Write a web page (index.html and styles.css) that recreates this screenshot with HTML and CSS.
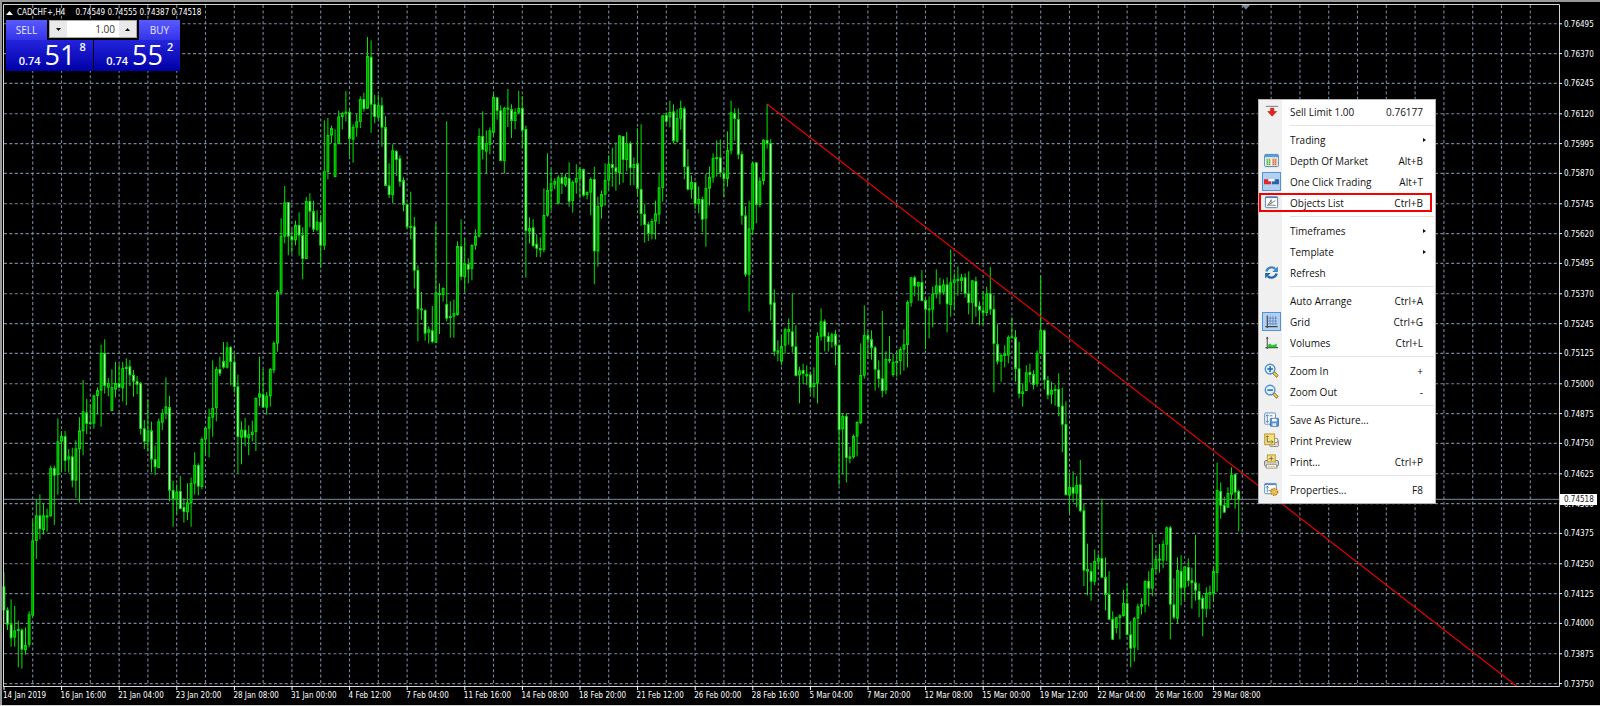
FILE: index.html
```html
<!DOCTYPE html>
<html lang="en">
<head>
    <meta charset="UTF-8">
    <meta name="viewport" content="width=device-width, initial-scale=1.0">
    <title>CADCHF+,H4</title>
    <link rel="stylesheet" href="styles.css">
</head>
<body>
    <main class="terminal">
        <svg id="chart" class="chart" viewBox="0 0 1600 706" role="img" aria-label="CADCHF+ H4 candlestick chart"></svg>

        <section class="quote">
            <h1 class="quote-title">
                <svg class="quote-arrow" viewBox="0 0 7 4"><path d="M0 4L3.5 0L7 4Z"/></svg>
                <span class="symbol">CADCHF+,H4</span>
                <span>0.74549 0.74555 0.74387 0.74518</span>
            </h1>
            <form class="trade">
                <div class="trade-top">
                    <button type="button" class="side">SELL</button>
                    <div class="volume">
                        <button type="button" class="step" aria-label="Decrease volume"><svg viewBox="0 0 5 3"><path d="M0 0H5L2.5 3Z"/></svg></button>
                        <input class="lots" type="text" value="1.00" aria-label="Volume">
                        <button type="button" class="step" aria-label="Increase volume"><svg viewBox="0 0 5 3"><path d="M0 3H5L2.5 0Z"/></svg></button>
                    </div>
                    <button type="button" class="side">BUY</button>
                </div>
                <div class="trade-prices">
                    <div class="price"><span class="small">0.74</span><span class="big">51</span><span class="sup">8</span></div>
                    <div class="price"><span class="small">0.74</span><span class="big">55</span><span class="sup">2</span></div>
                </div>
            </form>
        </section>

        <ul class="menu">
            <li><button class="item">
                <svg class="icon" viewBox="0 0 16 16"><path d="M2 2.5H15" stroke="#777"/><path d="M7 4.5H10.5V8H13.5L8.7 13L4 8H7Z" fill="#e8241c" stroke="#b01010" stroke-width=".6"/></svg>
                <span class="label">Sell Limit 1.00</span><span class="key">0.76177</span></button></li>
            <li class="sep"></li>
            <li><button class="item"><span class="icon"></span><span class="label">Trading</span><span class="sub"></span></button></li>
            <li><button class="item">
                <svg class="icon" viewBox="0 0 16 16"><rect x=".7" y="1.5" width="14.6" height="13" rx="1" fill="#fff" stroke="#3f7fbd"/><path d="M1 2H15V4.6H1Z" fill="#5b9ad6"/><path d="M2 5.5H7.6V13.5H2Z" fill="#c3e6a3"/><path d="M8.4 5.5H14V13.5H8.4Z" fill="#f6bda4"/><path d="M3 7.5H7M3 9.8H7M3 12H7" stroke="#2c7c26" stroke-dasharray="1.2 1"/><path d="M9.4 7.5H13.4M9.4 9.8H13.4M9.4 12H13.4" stroke="#a13b2b" stroke-dasharray="1.2 1"/></svg>
                <span class="label">Depth Of Market</span><span class="key">Alt+B</span></button></li>
            <li><button class="item">
                <svg class="icon checked" viewBox="0 0 16 16"><path d="M0 5.5H4.5V8H7.5V11H0Z" fill="#dc2b2b"/><path d="M16 5.5H11.5V8H8.5V11H16Z" fill="#2a62ad"/><path d="M5 5.5H11V7.4H5Z" fill="#fff"/></svg>
                <span class="label">One Click Trading</span><span class="key">Alt+T</span></button></li>
            <li class="highlight"><button class="item">
                <svg class="icon" viewBox="0 0 16 16"><rect x="1.5" y="2" width="13" height="11.5" rx="1" fill="#fff" stroke="#4d80b3"/><path d="M1.5 2.5H14.5" stroke="#4d80b3" stroke-width="1.6"/><path d="M3.5 11.5L8 5M3.5 11.5L12 6M5 10.7L12.5 11M7.5 5V9" stroke="#555" fill="none" stroke-width=".8"/></svg>
                <span class="label">Objects List</span><span class="key">Ctrl+B</span></button></li>
            <li class="sep"></li>
            <li><button class="item"><span class="icon"></span><span class="label">Timeframes</span><span class="sub"></span></button></li>
            <li><button class="item"><span class="icon"></span><span class="label">Template</span><span class="sub"></span></button></li>
            <li><button class="item">
                <svg class="icon" viewBox="0 0 16 16"><path d="M2.6 7A5.6 5.6 0 0 1 12 4.2" fill="none" stroke="#3e86c6" stroke-width="2.6"/><path d="M14.8 1.5V7.5H8.8Z" fill="#3e86c6"/><path d="M13.4 9A5.6 5.6 0 0 1 4 11.8" fill="none" stroke="#2467a8" stroke-width="2.6"/><path d="M1.2 14.5V8.5H7.2Z" fill="#2467a8"/></svg>
                <span class="label">Refresh</span></button></li>
            <li class="sep"></li>
            <li><button class="item"><span class="icon"></span><span class="label">Auto Arrange</span><span class="key">Ctrl+A</span></button></li>
            <li><button class="item">
                <svg class="icon checked" viewBox="0 0 16 16"><path d="M6.5 2V12M9.5 2V12M12.5 2V12M4 4.5H14M4 7.5H14M4 10.5H14" stroke="#5b86b8" stroke-width=".8"/><path d="M3.5 1.5V15M1.5 13.5H14.5" stroke="#444" stroke-width="1.2"/></svg>
                <span class="label">Grid</span><span class="key">Ctrl+G</span></button></li>
            <li><button class="item">
                <svg class="icon" viewBox="0 0 16 16"><path d="M3.5 2V15M1.5 13.5H15" stroke="#555" stroke-width="1.2"/><path d="M2 4L3.5 1.5L5 4Z" fill="#555"/><path d="M4.5 13V10L6.5 9L8.5 11L11 10.5L13.5 9V13Z" fill="#19cf28"/></svg>
                <span class="label">Volumes</span><span class="key">Ctrl+L</span></button></li>
            <li class="sep"></li>
            <li><button class="item">
                <svg class="icon" viewBox="0 0 16 16"><path d="M10 10L14.5 14.5" stroke="#8a6414" stroke-width="3.2"/><path d="M10.5 10.5L14 14" stroke="#f2cf58" stroke-width="2"/><circle cx="6.5" cy="6.5" r="5.2" fill="#dff0fc" stroke="#4d8fc9" stroke-width="1.4"/><path d="M6.5 3.5V9.5M3.5 6.5H9.5" stroke="#2167a8" stroke-width="1.6"/></svg>
                <span class="label">Zoom In</span><span class="key">+</span></button></li>
            <li><button class="item">
                <svg class="icon" viewBox="0 0 16 16"><path d="M10 10L14.5 14.5" stroke="#8a6414" stroke-width="3.2"/><path d="M10.5 10.5L14 14" stroke="#f2cf58" stroke-width="2"/><circle cx="6.5" cy="6.5" r="5.2" fill="#dff0fc" stroke="#4d8fc9" stroke-width="1.4"/><path d="M3.5 6.5H9.5" stroke="#2167a8" stroke-width="1.6"/></svg>
                <span class="label">Zoom Out</span><span class="key">-</span></button></li>
            <li class="sep"></li>
            <li><button class="item">
                <svg class="icon" viewBox="0 0 16 16"><rect x=".7" y="1" width="11.5" height="12" rx="1" fill="#fff" stroke="#5b8fc2"/><path d="M3.5 3V11M2 4.5L3.5 2.8L5 4.5M2 9.5L3.5 11.2L5 9.5M6 4H9" stroke="#44709d" fill="none" stroke-width=".9"/><rect x="6.7" y="6.7" width="8.8" height="8.6" rx="1" fill="#5a94cf" stroke="#2f669f" stroke-width=".8"/><path d="M8.5 7.2H13.5V10H8.5Z" fill="#fff"/><path d="M9 12H13V15H9Z" fill="#dbe9f7"/></svg>
                <span class="label">Save As Picture...</span></button></li>
            <li><button class="item">
                <svg class="icon" viewBox="0 0 16 16"><rect x="6" y="8" width="9.5" height="6.5" rx="1.5" fill="#ddd" stroke="#777" stroke-width=".8"/><circle cx="12.5" cy="8" r="2.5" fill="#eee" stroke="#666" stroke-width=".8"/><rect x=".8" y="1" width="10.5" height="11.5" fill="#f9df6e" stroke="#b08d2c" stroke-width=".9"/><path d="M3.5 3V9.5H9.5M8 8L9.5 9.5L8 11M2.2 4.3L3.5 3L4.8 4.3" fill="none" stroke="#4c5f87" stroke-width=".9"/></svg>
                <span class="label">Print Preview</span></button></li>
            <li><button class="item">
                <svg class="icon" viewBox="0 0 16 16"><rect x=".6" y="7" width="14.8" height="6" rx="1.5" fill="#d9d9d9" stroke="#666" stroke-width=".9"/><rect x="3.5" y="1" width="8.5" height="7.5" fill="#f9df6e" stroke="#b08d2c" stroke-width=".9"/><path d="M7.8 2.5V7M5.5 5H10" stroke="#4c5f87" stroke-width=".9"/><path d="M3 11H13L14 15H2Z" fill="#fff" stroke="#777" stroke-width=".8"/><path d="M4 13H12" stroke="#e2bd48"/></svg>
                <span class="label">Print...</span><span class="key">Ctrl+P</span></button></li>
            <li class="sep"></li>
            <li><button class="item">
                <svg class="icon" viewBox="0 0 16 16"><rect x=".7" y="1.5" width="12.5" height="11" rx="1" fill="#fff" stroke="#5b8fc2"/><path d="M.7 2.5H13" stroke="#5b8fc2" stroke-width="1.8"/><path d="M3.5 4.5V11M2.3 6L3.5 4.5L4.7 6M5 9H8" stroke="#44709d" fill="none" stroke-width=".9"/><circle cx="11" cy="10.5" r="3.6" fill="#f3c049" stroke="#bb841c" stroke-width="1.5" stroke-dasharray="1.7 .9"/><circle cx="11" cy="10.5" r="1.3" fill="#fff3cf" stroke="#bb841c" stroke-width=".6"/></svg>
                <span class="label">Properties...</span><span class="key">F8</span></button></li>
        </ul>
    </main>

    <script src="chart.js"></script>
</body>
</html>
```

FILE: styles.css
```css
* {
    box-sizing: border-box;
}

body {
    margin: 0;
    background-color: #000;
    font-family: "Open Sans", "Noto Sans", sans-serif;
}

button,
input {
    font-family: inherit;
    border: none;
    margin: 0;
    padding: 0;
}

.terminal {
    position: relative;
    overflow: hidden;
}

.chart {
    display: block;
    width: 100%;
    height: auto;
}

/* chart parts */
.grid line {
    stroke: #76869a;
    stroke-width: 1.1;
    stroke-dasharray: 3 2.4;
}

.frame {
    fill: none;
    stroke: #d4d4d4;
    stroke-width: 1;
}

.window-edge {
    fill: none;
    stroke: #979a97;
    stroke-width: 2;
}

.bottom-edge {
    fill: #d8d8d8;
}

.candles line,
.candles rect {
    stroke: #00e600;
    stroke-width: 1;
}

.candles .up {
    fill: #008a00;
}

.candles .down {
    fill: #fff;
}

.trend {
    stroke: #e60000;
    stroke-width: 1.2;
}

.bid-line {
    stroke: #7d8b9c;
    stroke-width: 1;
}

.bid-box {
    fill: #fff;
}

.marker {
    fill: #778899;
}

.axis text {
    font-family: "DejaVu Sans Condensed", "Open Sans", sans-serif;
    font-size: 8px;
    fill: #fff;
}

.axis line {
    stroke: #fff;
}

.axis .bid-text {
    fill: #222;
}

/* one click trading panel */
.quote {
    position: absolute;
    top: 6px;
    left: 6px;
}

.quote-title {
    display: flex;
    align-items: center;
    height: 14px;
    margin: 0;
    color: #fff;
    font-family: "DejaVu Sans Condensed", "Open Sans", sans-serif;
    font-size: 8px;
    font-weight: normal;
    line-height: 12px;
    white-space: nowrap;
}

.quote-arrow {
    width: 7px;
    height: 4px;
    fill: #fff;
}

.symbol {
    margin: 0 10px 0 4px;
}

.trade {
    width: 174px;
    background-color: #000;
}

.trade-top {
    display: flex;
    justify-content: space-between;
}

.side {
    width: 41px;
    height: 20px;
    color: #e6eaff;
    font-size: 10px;
    font-weight: 500;
    line-height: 18px;
    background: linear-gradient(#5a5aff, #3434e8);
}

.volume {
    display: flex;
    width: 88px;
    height: 18px;
    border: 1px solid #aaa;
    background-color: #fff;
}

.step {
    display: flex;
    align-items: center;
    justify-content: center;
    width: 17px;
    background-color: #e9e9e9;
}

.step svg {
    width: 5px;
    height: 3px;
    fill: #111;
}

.lots {
    flex: 1;
    min-width: 0;
    padding-right: 4px;
    font-size: 10px;
    text-align: right;
    color: #333;
    background-color: #fff;
}

.trade-prices {
    display: grid;
    grid-template-columns: 1fr 1fr;
    gap: 1px;
}

.price {
    display: flex;
    align-items: flex-end;
    justify-content: center;
    gap: 4px;
    height: 31px;
    padding: 0 0 4px 6px;
    color: #fff;
    background: linear-gradient(#2424dc, #0000a8);
}

.small {
    font-size: 11px;
    font-weight: 600;
    line-height: 12px;
}

.big {
    font-size: 27px;
    line-height: 24px;
}

.sup {
    align-self: flex-start;
    font-size: 11px;
    font-weight: 600;
    line-height: 14px;
}

/* context menu */
.menu {
    position: absolute;
    top: 99px;
    left: 1258px;
    width: 178px;
    margin: 0;
    padding: 1px 1px 3px;
    list-style: none;
    border: 1px solid #b5b5b5;
    background: linear-gradient(to right, #f0f0f0 23px, #fff 23px);
}

.item {
    display: flex;
    align-items: center;
    width: 100%;
    height: 21px;
    padding: 0 11px 0 2px;
    color: #111;
    font-size: 10px;
    line-height: 14px;
    text-align: left;
    background: none;
}

.icon {
    flex: none;
    width: 19px;
    height: 19px;
    padding: 2px;
    margin-right: 9px;
}

.checked {
    padding: 1px;
    border: 1px solid #4f94dc;
    background-color: #b3d0f0;
}

.label {
    flex: 1;
    white-space: nowrap;
}

.sub {
    border: 2px solid transparent;
    border-left: 3px solid #111;
    border-right: none;
    margin-right: -3px;
}

.sep {
    height: 7px;
    margin-left: 30px;
    padding-top: 3px;
}

.sep::before {
    content: "";
    display: block;
    height: 1px;
    background-color: #e2e2e2;
}

.highlight {
    position: relative;
}

.highlight::after {
    content: "";
    position: absolute;
    top: 1px;
    bottom: 1px;
    left: -1px;
    right: 2px;
    border: 2px solid #f40000;
}
```

FILE: chart.js
```js
const SVG_NS = 'http://www.w3.org/2000/svg';
const chart = document.getElementById('chart');

const LEFT = 4, TOP = 4, RIGHT = 1559, BOTTOM = 686;
const STEP = 3.6;

// high, body top, body bottom, low, rising (1) or falling (0)
// values are thirds of a pixel below the block's base
const blocks = [
    { base: 900, bars: [
        [816,860,930,970,0],[922,930,973,990,0],[898,973,1014,1040,0],[918,992,1012,1040,1],[962,988,992,1102,1],
        [985,990,1048,1106,0],[982,1036,1050,1064,1],[934,944,1033,1042,1],[662,722,946,950,1],[597,647,722,777,1],
        [583,647,687,718,0],[609,647,689,704,1],[626,647,652,695,1],[497,505,648,650,1],[497,505,526,675,0],
        [355,425,524,584,1],[393,409,424,515,1],[393,409,482,515,0],[447,470,478,518,1],[443,470,541,562,0],
        [421,446,541,593,1],[352,392,447,608,1],[240,335,393,466,1],[297,338,371,402,0],[312,368,372,374,1],
        [284,287,370,386,1],[262,271,287,343,1],[134,160,271,380,1],[118,160,257,281,0],[234,250,262,289,1],
        [208,262,332,334,1],[186,250,268,292,1],[194,250,262,264,0],[186,205,264,304,1],[175,201,206,316,1],
        [180,200,225,258,0],[210,225,244,290,0],[228,244,253,282,0],[246,250,386,404,0],[360,386,424,447,0],
        [299,392,424,455,1],[365,392,478,517,0],[436,478,500,525,0],[356,365,503,505,1],[327,340,367,390,1],
        [232,320,340,358,1],[287,322,571,604,0],[543,571,597,680,0],[553,576,598,642,1],[527,574,626,628,0],
        [595,622,635,668,0],[550,608,636,660,1],[533,550,608,680,1],[457,496,550,584,1],[490,496,559,586,0],
        [412,418,560,568,1],[380,384,418,466,1],[326,352,385,472,1],[181,325,352,410,1],[200,208,323,364,1],
        [170,208,220,228,0],[126,184,202,206,0],[126,143,202,206,1],[138,142,185,256,0],[160,186,260,278,0],
        [224,260,410,520,0],[364,390,412,493,1],[354,390,412,439,0],[376,404,414,466,1],[362,396,404,424,1],
        [292,295,395,453,1],[170,281,292,318,1],[207,283,322,322,0],[276,288,322,344,1],[204,208,288,320,1],
        [124,130,210,220,1]
    ]},
    { base: 60, bars: [
        [810,817,970,995,1],[595,649,817,824,1],[498,548,649,670,1],[546,547,649,706,0],[627,649,660,700,0],
        [602,616,660,676,1],[577,616,646,707,0],[622,646,716,778,0],[531,544,716,718,1],[520,544,574,622,0],
        [542,574,628,636,0],[571,606,628,634,1],[585,607,676,744,0],[301,455,676,690,1],[294,346,455,478,1],
        [317,325,346,370,1],[328,373,470,472,1],[272,290,371,373,1],[275,280,290,328,1],[213,276,280,304,1],
        [268,276,356,408,0],[313,322,358,428,1],[281,305,322,350,1],[229,238,305,324,1],[218,238,266,275,0],
        [51,109,265,266,1],[61,111,253,338,0],[225,253,290,310,0],[225,256,292,298,1],[232,257,322,380,0],
        [289,322,497,499,0],[430,497,524,534,0],[373,392,524,550,1],[390,394,419,468,0],[406,416,485,500,0],
        [472,481,554,574,0],[550,553,620,625,0],[515,619,623,658,1],[591,620,751,806,0],[736,751,867,964,0],
        [816,866,870,899,1],[868,871,940,962,0],[919,929,937,970,1],[858,932,965,970,0],[610,818,967,969,1],
        [790,820,824,942,1],[802,805,824,845,1],[304,853,895,904,0],[844,889,893,953,1],[839,880,889,953,1],
        [664,679,884,887,1],[598,679,770,781,0],[655,733,770,815,1],[715,733,748,790,0],[673,676,746,781,1],
        [628,649,676,689,1],[325,349,649,652,1],[274,349,389,418,0],[331,370,394,461,1],[322,332,373,403,1],
        [220,232,337,346,1],[232,233,272,299,0],[256,272,422,424,0],[260,265,422,461,1],[207,264,268,321,1],
        [253,268,302,354,0],[265,277,302,328,1],[213,265,277,281,1],[228,265,331,384,0],[317,328,632,773,0],
        [592,625,634,670,1],[598,623,677,682,0],[643,672,685,711,0],[652,685,690,711,1],[505,586,689,697,1],
        [400,511,586,590,1],[448,491,512,570,1],[475,484,493,508,1],[466,473,550,553,1],[460,473,491,522,0]
    ]},
    { base: 210, bars: [
        [312,322,345,351,1],[277,325,394,410,0],[331,337,392,428,1],[283,325,337,371,1],[292,298,325,386,1],
        [296,298,376,380,0],[364,367,374,388,1],[322,328,367,436,1],[290,328,543,643,0],[380,409,543,590,1],
        [362,373,409,446,1],[280,331,373,407,1],[256,283,331,359,1],[233,283,293,350,0],[217,293,306,362,0],
        [196,197,308,344,1],[198,199,269,338,0],[186,221,269,304,1],[214,220,293,346,0],[262,283,293,346,1],
        [175,281,356,378,0],[163,358,431,467,0],[403,433,464,518,0],[455,463,491,513,0],[445,454,490,508,1],
        [392,431,454,508,1],[312,353,433,462,1],[136,137,353,395,1],[127,136,154,160,0],[92,127,141,172,1],
        [103,125,213,220,0],[118,145,214,218,1],[92,115,145,179,1],[110,116,290,328,0],[238,290,358,361,0],
        [316,337,358,386,1],[335,338,401,418,0],[349,388,401,430,1],[380,388,448,487,0],[312,355,445,530,1],
        [290,322,355,406,1],[250,265,322,338,1],[211,262,266,320,1],[208,263,308,322,0],[295,310,326,382,0],
        [184,241,326,350,1],[92,128,241,253,1],[115,130,146,212,0],[115,148,253,268,0],[244,253,437,464,0],
        [409,437,613,620,0],[392,476,613,724,1],[275,280,478,494,1],[277,278,404,460,0],[322,334,404,412,1],
        [208,210,332,344,1],[102,211,221,236,0],[207,220,703,752,0],[658,698,844,858,0],[811,842,847,874,1],
        [794,829,874,886,1],[773,779,826,850,1],[745,778,785,824,1],[670,785,829,848,0],[766,830,917,919,0],
        [890,902,915,1000,1],[881,901,911,942,0],[886,913,918,945,1],[904,914,952,971,0],[892,940,950,983,1],
        [787,799,940,1000,1],[715,755,799,812,1],[748,755,799,844,0],[787,799,815,845,0],[788,794,815,833,1],
        [779,793,826,886,0]
    ]},
    { base: 690, bars: [
        [343,346,600,765,0],[552,559,597,733,1],[550,559,683,757,0],[650,680,685,700,1],[613,619,681,686,1],
        [574,577,619,679,1],[340,436,578,582,1],[226,316,436,446,1],[303,317,328,387,0],[301,328,353,389,0],
        [348,353,418,482,0],[391,420,446,473,0],[243,446,482,502,0],[364,388,480,492,1],[318,388,392,400,1],
        [372,397,434,440,1],[361,394,398,440,1],[350,358,392,434,1],[298,344,358,422,1],[211,217,344,412,1],
        [142,143,217,230,1],[137,143,168,199,0],[154,157,169,212,1],[120,157,212,214,0],[206,211,238,358,0],
        [199,236,240,325,1],[170,192,238,292,1],[118,167,192,205,1],[143,167,188,223,0],[148,164,187,194,1],
        [142,164,222,307,0],[58,158,224,260,1],[130,149,158,238,1],[109,147,152,197,1],[132,143,152,186,1],
        [130,143,191,203,0],[124,191,218,253,0],[151,152,217,280,1],[140,154,230,260,0],[214,228,241,286,0],
        [182,242,248,284,0],[170,192,248,258,1],[111,191,238,255,0],[196,238,341,487,0],[283,343,394,403,0],
        [370,376,394,455,1],[346,373,377,412,1],[316,322,376,400,1],[262,320,324,325,1],[300,322,416,455,0],
        [335,416,491,505,0],[460,485,491,530,1],[406,428,482,483,1],[401,427,434,458,0],[421,433,464,478,0],
        [361,370,461,470,1],[138,301,370,372,1],[298,302,450,478,0],[438,451,495,508,0],[455,481,493,522,1],
        [464,478,482,527,1],[430,478,530,559,0],[473,528,583,667,0],[514,583,794,797,0]
    ]},
    { base: 1320, bars: [
        [100,142,166,220,1],[94,142,160,187,0],[108,136,160,202,1],[60,134,212,217,0],[190,212,391,438,0],
        [311,388,394,466,1],[370,394,424,482,0],[329,364,424,436,1],[342,355,364,388,1],[176,355,412,415,0],
        [352,412,464,511,0],[394,463,538,540,0],[514,538,598,600,0],[530,533,563,580,1],[523,527,533,598,1],
        [449,490,527,530,1],[431,490,584,586,0],[544,584,625,682,0],[530,535,622,665,1],[491,500,535,630,1],
        [475,493,499,523,1],[421,424,493,517,1],[394,424,445,499,0],[283,386,445,469,1],[343,358,386,401,1],
        [312,357,361,398,1],[301,313,361,385,1],[259,263,313,364,1],[258,263,493,598,0],[415,494,532,538,0],
        [352,391,535,550,1],[346,394,444,496,0],[379,380,442,480,1],[355,382,422,440,0],[383,422,428,506,0],
        [285,428,451,482,0],[430,454,479,532,0],[466,475,506,589,0],[442,460,505,532,1],[437,457,463,508,1],
        [379,394,460,484,1],[68,151,398,455,1],[127,154,196,236,0],[170,196,217,218,0],[142,160,202,203,1],
        [82,106,163,180,1],[100,103,157,206,0],[150,154,178,274,0]
    ]}
];

const prices = [
    '0.76495', '0.76370', '0.76245', '0.76120', '0.75995', '0.75870', '0.75745', '0.75620',
    '0.75495', '0.75370', '0.75245', '0.75125', '0.75000', '0.74875', '0.74750', '0.74625',
    '0.74500', '0.74375', '0.74250', '0.74125', '0.74000', '0.73875', '0.73750'
];

const dates = [
    '14 Jan 2019', '16 Jan 16:00', '21 Jan 04:00', '23 Jan 20:00', '28 Jan 08:00', '31 Jan 00:00',
    '4 Feb 12:00', '7 Feb 04:00', '11 Feb 16:00', '14 Feb 08:00', '18 Feb 20:00', '21 Feb 12:00',
    '26 Feb 00:00', '28 Feb 16:00', '5 Mar 04:00', '7 Mar 20:00', '12 Mar 08:00', '15 Mar 00:00',
    '19 Mar 12:00', '22 Mar 04:00', '26 Mar 16:00', '29 Mar 08:00'
];

function add(parent, tag, attrs, text) {
    const el = document.createElementNS(SVG_NS, tag);
    for (const name in attrs) {
        el.setAttribute(name, attrs[name]);
    }
    if (text) {
        el.textContent = text;
    }
    parent.appendChild(el);
    return el;
}

function line(parent, x1, y1, x2, y2, cls) {
    const attrs = { x1, y1, x2, y2 };
    if (cls) attrs.class = cls;
    return add(parent, 'line', attrs);
}

// Grid
const grid = add(chart, 'g', { class: 'grid' });
const gridY = prices.map((p, i) => 23.8 + i * 30 - (i % 3) * 0.2);
gridY.forEach(y => line(grid, LEFT, y, RIGHT, y));
for (let x = 32.7; x < RIGHT; x += 28.8) {
    line(grid, x, TOP + 1, x, BOTTOM);
}

// Bid line runs under the candles
line(chart, LEFT, 499.3, RIGHT, 499.3, 'bid-line');

// Candles
const candles = add(chart, 'g', { class: 'candles' });
let index = 0;
blocks.forEach(block => {
    block.bars.forEach(([high, top, bottom, low, up]) => {
        const x = 3.9 + STEP * index;
        const y = v => (block.base + v) / 3;
        line(candles, x, y(high), x, y(low));
        add(candles, 'rect', {
            class: up ? 'up' : 'down',
            x: x - 0.9,
            y: y(top) + 0.2,
            width: 1.8,
            height: Math.max((bottom - top) / 3 - 0.4, 0.4)
        });
        index++;
    });
});

line(chart, 767, 104, 1516.5, BOTTOM, 'trend');
add(chart, 'path', { class: 'marker', d: 'M1241.5 5H1250L1246 9.5Z' });

// Frame and window edges
add(chart, 'path', { class: 'frame', d: `M3.5 ${BOTTOM + 0.5}V4.5H${RIGHT + 0.5}V${BOTTOM + 0.5}Z` });
add(chart, 'path', { class: 'window-edge', d: 'M1 706V1H1600' });
add(chart, 'rect', { class: 'bottom-edge', x: 0, y: 705, width: 1600, height: 1 });

// Axes
const axis = add(chart, 'g', { class: 'axis' });
prices.forEach((p, i) => {
    line(axis, RIGHT, gridY[i], RIGHT + 3, gridY[i]);
    add(axis, 'text', { x: 1564, y: gridY[i] + 3 }, p);
});
add(axis, 'rect', { class: 'bid-box', x: 1560, y: 494, width: 37, height: 11 });
add(axis, 'text', { class: 'bid-text', x: 1564, y: 502 }, '0.74518');

dates.forEach((d, i) => {
    const x = LEFT + i * STEP * 16;
    line(axis, x, BOTTOM, x, BOTTOM + 4);
    add(axis, 'text', { x: x - 1, y: 698 }, d);
});
```
